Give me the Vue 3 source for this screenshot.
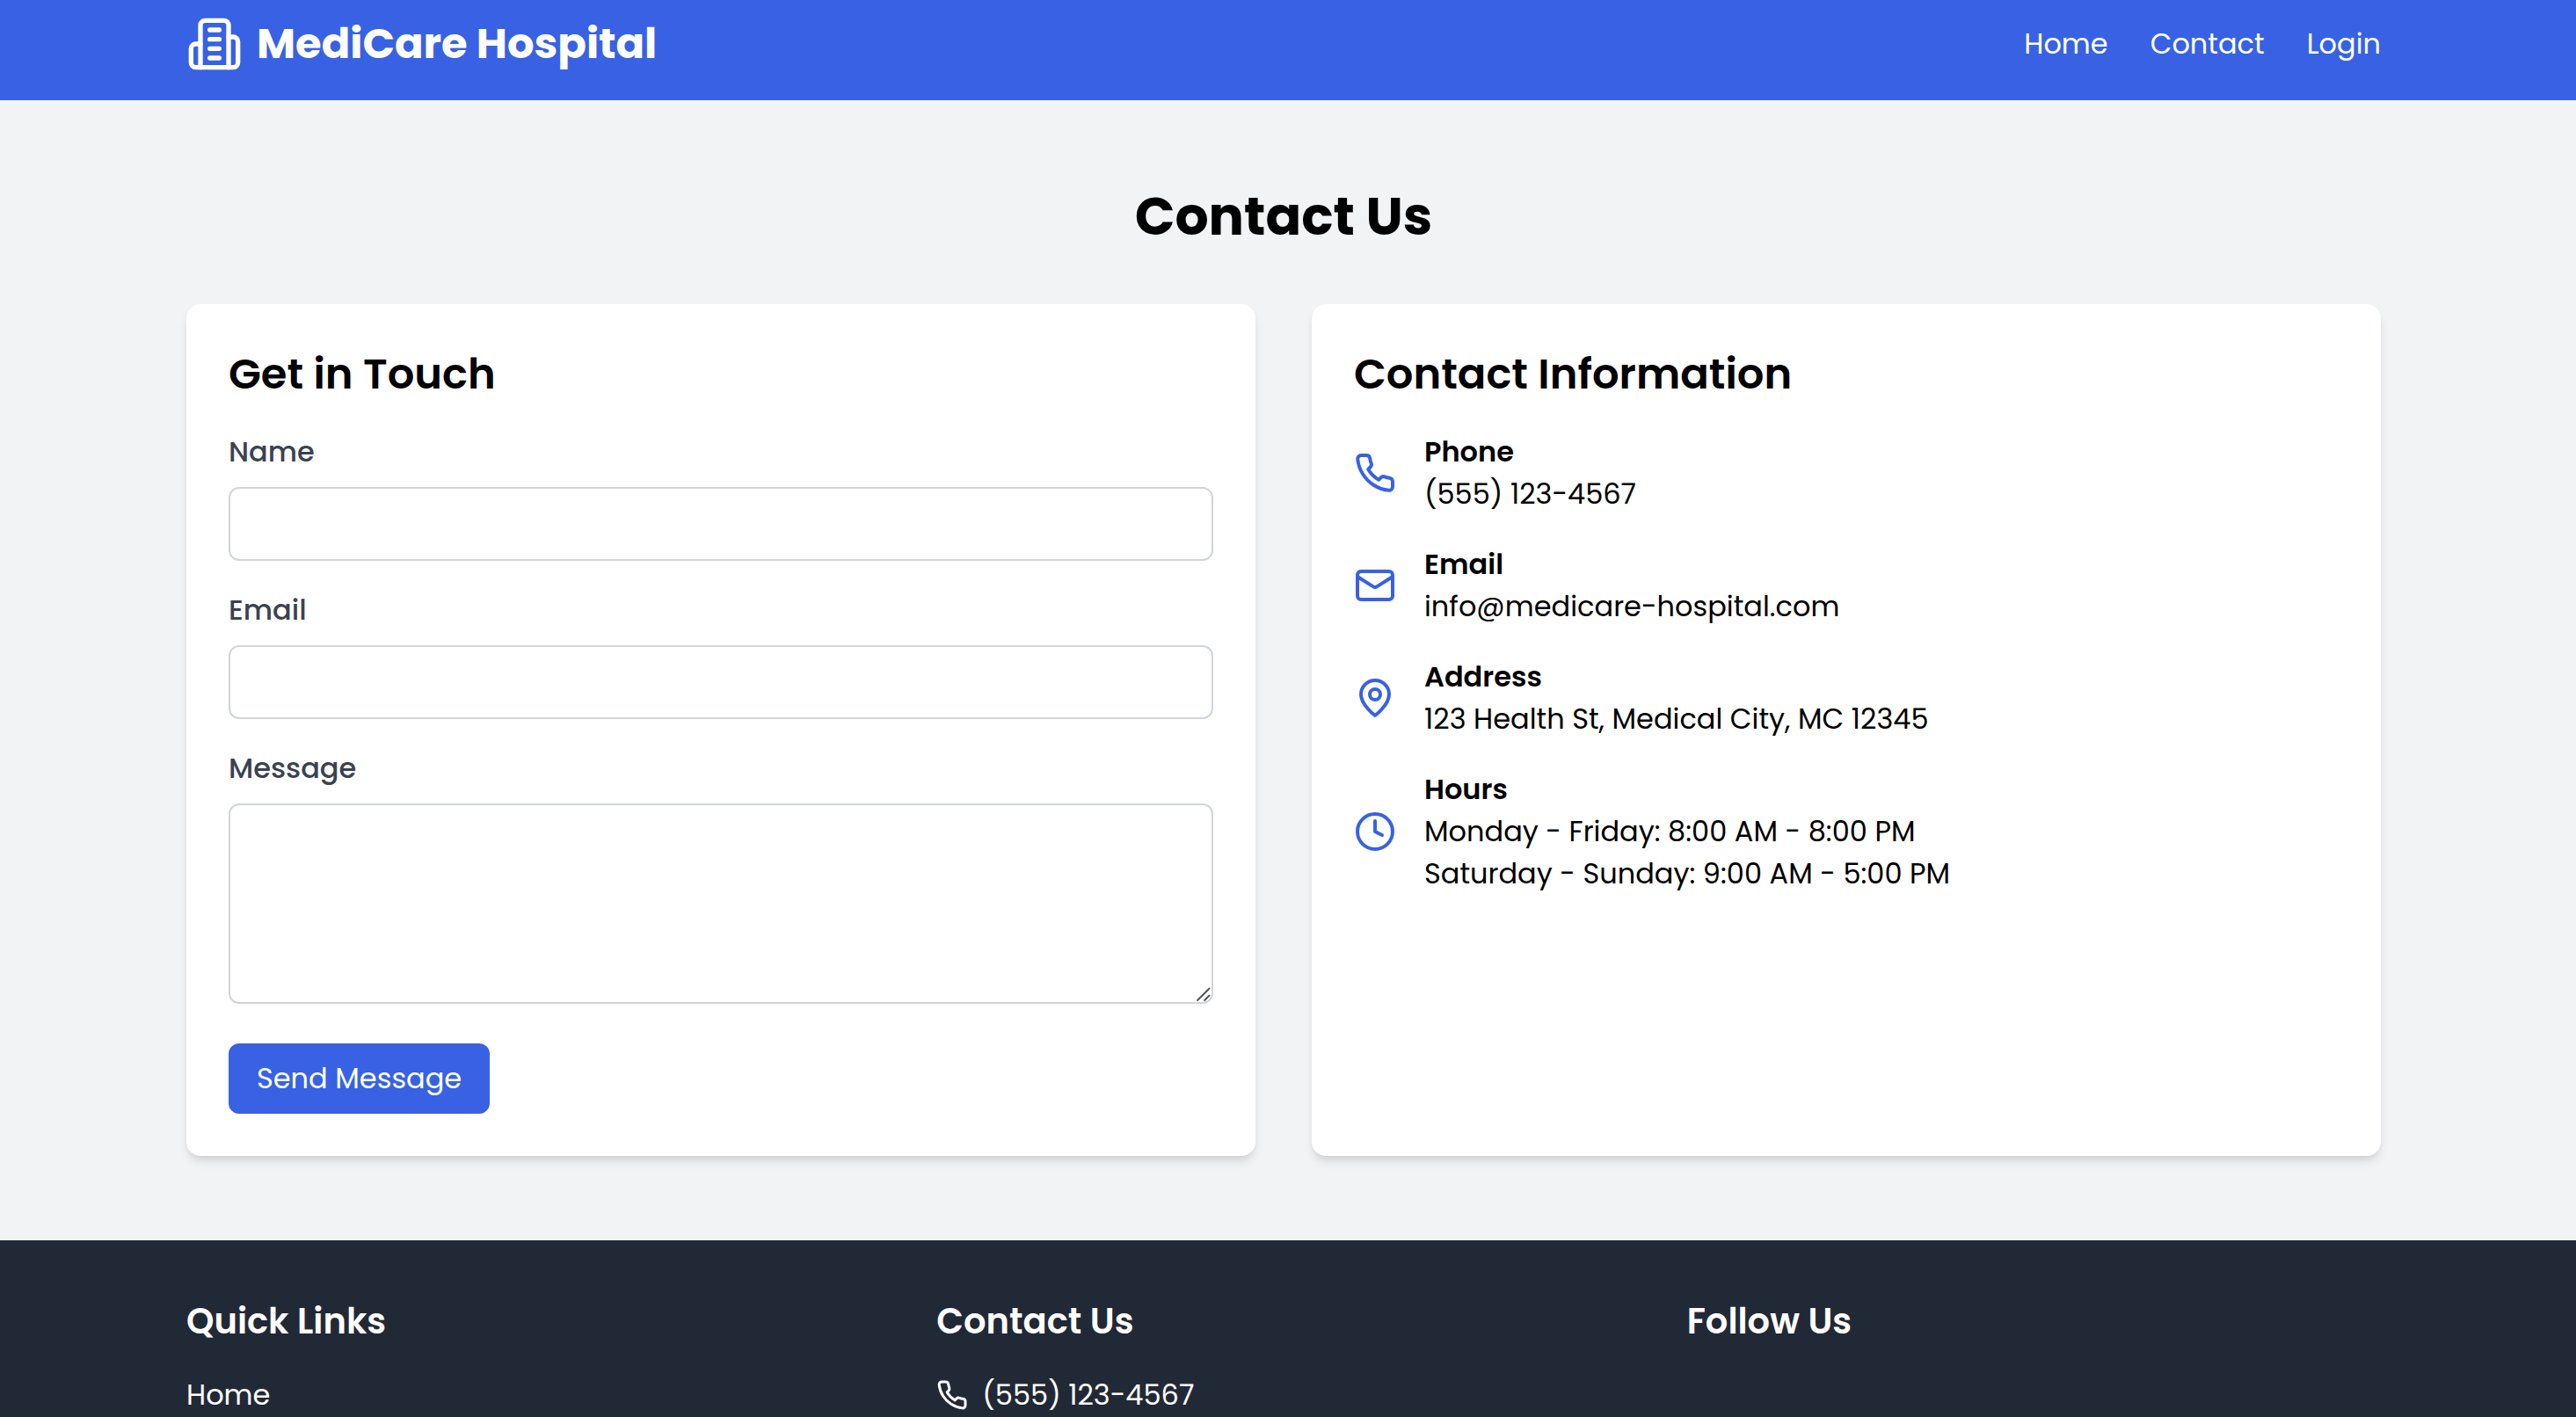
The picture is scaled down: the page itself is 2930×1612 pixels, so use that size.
<script setup>
import { ref } from 'vue'

const form = ref({ name: '', email: '', message: '' })

const icons = {
  phone:
    '<path d="M22 16.92v3a2 2 0 0 1-2.18 2 19.79 19.79 0 0 1-8.63-3.07 19.5 19.5 0 0 1-6-6 19.79 19.79 0 0 1-3.07-8.67A2 2 0 0 1 4.11 2h3a2 2 0 0 1 2 1.72 12.84 12.84 0 0 0 .7 2.81 2 2 0 0 1-.45 2.11L8.09 9.91a16 16 0 0 0 6 6l1.27-1.27a2 2 0 0 1 2.11-.45 12.84 12.84 0 0 0 2.81.7A2 2 0 0 1 22 16.92z"/>',
  mail: '<rect width="20" height="16" x="2" y="4" rx="2"/><path d="m22 7-8.97 5.7a1.94 1.94 0 0 1-2.06 0L2 7"/>',
  pin: '<path d="M20 10c0 6-8 12-8 12s-8-6-8-12a8 8 0 0 1 16 0Z"/><circle cx="12" cy="10" r="3"/>',
  clock: '<circle cx="12" cy="12" r="10"/><path d="M12 6v6l4 2"/>',
}

const navLinks = ['Home', 'Contact', 'Login']

const details = [
  { icon: 'phone', title: 'Phone', lines: ['(555) 123-4567'] },
  { icon: 'mail', title: 'Email', lines: ['info@medicare-hospital.com'] },
  { icon: 'pin', title: 'Address', lines: ['123 Health St, Medical City, MC 12345'] },
  {
    icon: 'clock',
    title: 'Hours',
    lines: ['Monday - Friday: 8:00 AM - 8:00 PM', 'Saturday - Sunday: 9:00 AM - 5:00 PM'],
  },
]
</script>

<template>
  <div class="page">
    <header class="header band">
      <div class="container header-row">
        <a href="#" class="brand">
          <svg class="icon icon-lg" viewBox="0 0 24 24" aria-hidden="true">
            <path d="M6 22V4a2 2 0 0 1 2-2h8a2 2 0 0 1 2 2v18Z" />
            <path d="M6 12H4a2 2 0 0 0-2 2v6a2 2 0 0 0 2 2h2" />
            <path d="M18 9h2a2 2 0 0 1 2 2v9a2 2 0 0 1-2 2h-2" />
            <path d="M10 6h4M10 10h4M10 14h4M10 18h4" />
          </svg>
          <span>MediCare Hospital</span>
        </a>
        <nav class="nav">
          <a v-for="link in navLinks" :key="link" href="#">{{ link }}</a>
        </nav>
      </div>
    </header>

    <main class="main band">
      <div class="container">
        <h1>Contact Us</h1>
        <div class="cards">
          <section class="card">
            <h2>Get in Touch</h2>
            <form @submit.prevent>
              <div class="field">
                <label for="name">Name</label>
                <input id="name" v-model="form.name" type="text" />
              </div>
              <div class="field">
                <label for="email">Email</label>
                <input id="email" v-model="form.email" type="email" />
              </div>
              <div class="field field-last">
                <label for="message">Message</label>
                <div class="message-box">
                  <textarea id="message" v-model="form.message" rows="4"></textarea>
                  <svg class="grip" viewBox="0 0 20 20" aria-hidden="true">
                    <path d="M3.5 18.5 18 4M11.5 18.5 18 12" />
                  </svg>
                </div>
              </div>
              <button type="submit">Send Message</button>
            </form>
          </section>

          <section class="card">
            <h2>Contact Information</h2>
            <ul class="details">
              <li v-for="item in details" :key="item.title">
                <svg class="icon icon-md" viewBox="0 0 24 24" aria-hidden="true" v-html="icons[item.icon]"></svg>
                <div>
                  <h3>{{ item.title }}</h3>
                  <p v-for="line in item.lines" :key="line">{{ line }}</p>
                </div>
              </li>
            </ul>
          </section>
        </div>
      </div>
    </main>

    <footer class="footer band">
      <div class="container footer-grid">
        <div>
          <h3>Quick Links</h3>
          <a href="#">Home</a>
        </div>
        <div>
          <h3>Contact Us</h3>
          <p class="footer-phone">
            <svg class="icon icon-sm" viewBox="0 0 24 24" aria-hidden="true" v-html="icons.phone"></svg>
            <span>(555) 123-4567</span>
          </p>
        </div>
        <div>
          <h3>Follow Us</h3>
        </div>
      </div>
    </footer>
  </div>
</template>

<style>
body {
  margin: 0;
  background: #f2f3f5;
}
</style>

<style scoped>
.page {
  display: flex;
  flex-direction: column;
  min-height: 100vh;
  font-family: Poppins, Inter, sans-serif;
  font-size: 32px;
  line-height: 48px;
  color: #000;
}

.page * {
  box-sizing: border-box;
}

h1,
h2,
h3,
p,
ul {
  margin: 0;
  padding: 0;
}

a {
  color: inherit;
  text-decoration: none;
}

.band {
  padding-right: 10px;
}

.container {
  max-width: 2560px;
  margin: 0 auto;
  padding: 0 32px;
}

.icon {
  flex: none;
  fill: none;
  stroke: currentColor;
  stroke-width: 2;
  stroke-linecap: round;
  stroke-linejoin: round;
}

.icon-lg {
  width: 64px;
  height: 64px;
}

.icon-md {
  width: 48px;
  height: 48px;
}

.icon-sm {
  width: 36px;
  height: 36px;
}

.header {
  padding-top: 18px;
  padding-bottom: 32px;
  background: #3862e3;
  color: #fff;
}

.header-row {
  display: flex;
  align-items: center;
  justify-content: space-between;
}

.brand {
  display: flex;
  align-items: center;
  gap: 16px;
  font-size: 48px;
  line-height: 64px;
  font-weight: 700;
}

.nav {
  display: flex;
  gap: 48px;
}

.main {
  padding-top: 96px;
  padding-bottom: 96px;
}

h1 {
  margin-bottom: 64px;
  font-size: 60px;
  line-height: 72px;
  font-weight: 700;
  text-align: center;
}

.cards {
  display: grid;
  grid-template-columns: 1fr 1fr;
  gap: 64px;
}

.card {
  padding: 48px;
  border-radius: 16px;
  background: #fff;
  box-shadow: 0 8px 12px -2px rgba(0, 0, 0, 0.1), 0 4px 8px -4px rgba(0, 0, 0, 0.1);
}

h2 {
  margin-bottom: 32px;
  font-size: 48px;
  line-height: 64px;
  font-weight: 600;
}

.field {
  margin-bottom: 32px;
}

.field-last {
  margin-bottom: 45px;
}

label {
  display: block;
  margin-bottom: 16px;
  font-weight: 500;
  color: #3a4251;
}

input,
textarea {
  display: block;
  width: 100%;
  margin: 0;
  padding: 16px 24px;
  border: 2px solid #d1d5da;
  border-radius: 12px;
  background: #fff;
  font: inherit;
  outline: none;
}

input {
  height: 84px;
}

.message-box {
  position: relative;
}

textarea {
  height: 228px;
  resize: vertical;
}

textarea::-webkit-resizer {
  background: transparent;
}

/* Resize grip drawn over the corner of the message box */
.grip {
  position: absolute;
  right: 2px;
  bottom: 2px;
  width: 20px;
  height: 20px;
  fill: none;
  stroke: #555;
  stroke-width: 2;
  pointer-events: none;
}

button {
  display: block;
  padding: 16px 32px;
  border: 0;
  border-radius: 12px;
  background: #3862e3;
  color: #fff;
  font: inherit;
  cursor: pointer;
}

.details {
  display: flex;
  flex-direction: column;
  gap: 32px;
  list-style: none;
}

.details li {
  display: flex;
  align-items: center;
  gap: 32px;
}

.details .icon {
  color: #3862e3;
}

.details h3 {
  font-size: 32px;
  font-weight: 600;
}

.footer {
  flex: 1;
  padding-top: 64px;
  background: #222936;
  color: #fff;
}

.footer-grid {
  display: grid;
  grid-template-columns: repeat(3, 1fr);
  gap: 64px;
}

.footer h3 {
  margin-bottom: 32px;
  font-size: 40px;
  line-height: 56px;
  font-weight: 600;
}

.footer a {
  display: block;
}

.footer-phone {
  display: flex;
  align-items: center;
  gap: 16px;
}
</style>
